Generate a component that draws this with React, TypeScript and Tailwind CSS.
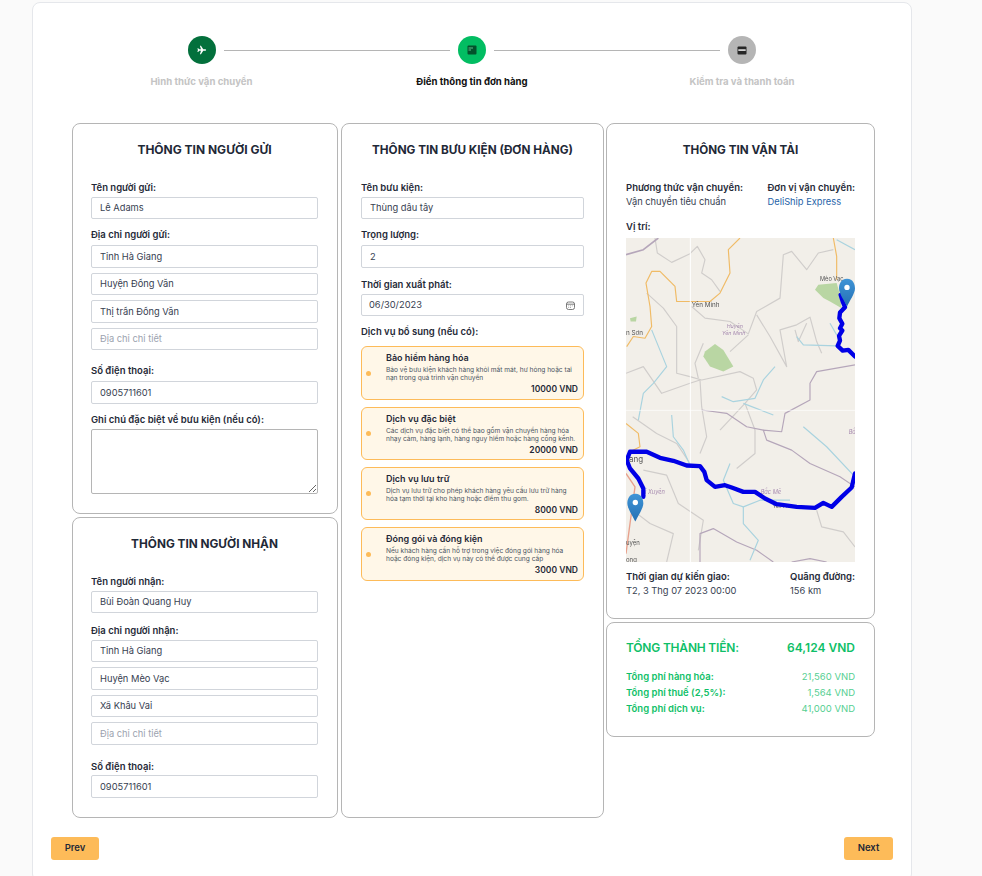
import React from "react";

const inputCls =
  "block w-full h-[22.5px] border border-[#d1d5db] rounded-[2px] bg-white px-2 text-[9.3px] text-[#374151] placeholder:text-[#9ca3af] outline-none";

function Label({ children, className = "" }: { children: React.ReactNode; className?: string }) {
  return <div className={"text-[9.5px] leading-[14px] font-semibold text-[#1f2937] " + className}>{children}</div>;
}

function In({ value, placeholder }: { value?: string; placeholder?: string }) {
  return <input className={inputCls} defaultValue={value} placeholder={placeholder} readOnly />;
}

function Heading({ children, className = "text-[11.7px]" }: { children: React.ReactNode; className?: string }) {
  return <h2 className={"text-center leading-[18px] font-bold text-[#1f2937] " + className}>{children}</h2>;
}

function Address({ lines }: { lines: string[] }) {
  return (
    <div className="flex flex-col gap-[5px]">
      {lines.map((l) => (
        <In key={l} value={l} />
      ))}
      <In placeholder="Địa chỉ chi tiết" />
    </div>
  );
}

function Service({ title, desc, price, h }: { title: string; desc: string[]; price: string; h: string }) {
  return (
    <div className={"flex items-center rounded-[6px] border border-[#fdbb59] bg-[#fff7e8] pl-[4px] pr-[5px] " + h}>
      <span className="w-[5px] h-[5px] rounded-full bg-[#fdbb59] mr-[15px] shrink-0" />
      <div className="flex-1 self-stretch pt-[5px]">
        <div className="text-[9px] leading-[12px] font-semibold text-[#1f2937]">{title}</div>
        <div className="text-[6.6px] leading-[8px] mt-[1.5px] text-[#4b5563]">
          {desc.map((d) => (
            <div key={d}>{d}</div>
          ))}
        </div>
        <div className="text-right text-[8.5px] leading-[12px] font-semibold text-[#1f2937] mt-[1.5px]">{price}</div>
      </div>
    </div>
  );
}

function MapView() {
  return (
    <div className="overflow-hidden h-[324px]">
      <svg viewBox="48 25 687 970" className="block w-full h-[324px] blur-[0.35px]" preserveAspectRatio="none">
        <rect x="48" y="25" width="687" height="970" fill="#f2efe9" />
        <g fill="none" stroke="#d0cdcb" strokeWidth="3.5" strokeLinejoin="round">
          <path d="M135 25 L142 70 L185 98 L240 72 L262 50 L285 90 L275 130 L305 150 L330 185" />
          <path d="M245 230 L285 265 L360 275 L415 312 L440 245 L510 205 L520 75 L545 65 L590 120 L625 70 L670 60" />
          <path d="M360 365 L415 315" />
          <path d="M110 190 L160 235 L200 290 L200 430 L240 440 L275 450 L390 425 L430 445 L440 480 L405 520 L435 600 L435 670 L380 715" />
          <path d="M48 430 L100 410 L155 490 L240 460 L270 450 L275 530 L290 620 L270 670" />
          <path d="M440 255 L480 320 L530 410 L510 300 L560 285 L600 262 L620 335 L635 370" />
          <path d="M555 300 L565 335 L590 280" />
          <path d="M68 560 L140 610 L200 640 L240 700" />
          <path d="M100 720 L170 735 L205 820 L280 870 L265 960" />
          <path d="M620 840 L635 890 L700 905 L735 950" />
          <path d="M55 830 L120 880 L190 910 L170 995" />
          <path d="M265 445 L255 400 L280 340" />
          <path d="M330 600 L405 520" />
        </g>
        <g fill="none" stroke="#b5a6ba" strokeWidth="3.5" strokeLinejoin="round">
          <path d="M48 75 L100 60 L145 25" strokeWidth="5" />
          <path d="M735 405 L620 425 L600 460 L600 510 L525 550 L515 605 L460 600 L470 630 L545 660 L600 700 L690 740 L735 770" />
          <path d="M270 995 L270 910 L310 895 L380 935 L440 960 L490 995" />
          <path d="M545 995 L600 985 L650 995" />
          <path d="M275 540 L350 550 L410 590 L460 600" />
        </g>
        <g fill="none" stroke="#f0bb66" strokeWidth="3.5" strokeLinejoin="round">
          <path d="M390 25 L355 60 L360 130 L330 190 L300 215 L200 215 L195 170 L150 125 L125 125 L108 160 L120 230 L125 290 L105 325 L70 320 L50 350" />
          <path d="M670 25 L680 80 L680 150" />
          <path d="M48 580 L85 610 L90 650 L60 665" />
        </g>
        <g fill="none" stroke="#a9d3df" strokeWidth="3.5" strokeLinejoin="round">
          <path d="M125 300 L170 410 L130 460 L100 490 L85 570" />
          <path d="M495 410 L460 450 L435 505 L370 515 L335 500" />
          <path d="M400 520 L490 555" />
          <path d="M185 555 L190 620 L220 660 L240 705" />
          <path d="M580 590 L650 650 L735 740" />
          <path d="M360 700 L340 750 L370 820 L400 830 L450 810 L540 810" />
          <path d="M400 830 L400 880 L445 930 L420 990" />
          <path d="M560 320 L580 345 L680 348" />
          <path d="M660 280 L680 315" />
          <path d="M680 30 L735 60" />
        </g>
        <path d="M48 730 L75 770 L60 880 L48 970" fill="none" stroke="#e8a08c" strokeWidth="4" />
        <path d="M625 165 L680 160 L690 195 L695 235 L660 215 L640 205 L615 180 Z" fill="#b9d6a3" />
        <path d="M315 342 L340 360 L370 410 L340 425 L300 410 L280 380 L285 365 Z" fill="#b9d6a3" />
        <path d="M60 265 L80 260 L78 275 L62 275 Z" fill="#b9d6a3" />
        <path d="M241 25 V995" stroke="#ffffff" strokeWidth="3" fill="none" />
        <path d="M48 541 H735" stroke="#ffffff" strokeWidth="2.5" opacity="0.8" fill="none" />
        <g fontFamily="Inter, sans-serif">
          <text x="630" y="154" fontSize="17" fill="#555">Mèo Vạc</text>
          <text x="245" y="232" fontSize="19" fill="#555">Yên Minh</text>
          <text x="48" y="314" fontSize="19" fill="#555">n Sơn</text>
          <text x="350" y="293" fontSize="16" fill="#a78bb0" fontStyle="italic">Huyện</text>
          <text x="336" y="316" fontSize="16" fill="#a78bb0" fontStyle="italic">Yên Minh</text>
          <text x="57" y="696" fontSize="24" fill="#555">ang</text>
          <text x="105" y="792" fontSize="17" fill="#a78bb0" fontStyle="italic">ị Xuyên</text>
          <text x="452" y="791" fontSize="17" fill="#a78bb0" fontStyle="italic">Bắc Mê</text>
          <text x="716" y="613" fontSize="17" fill="#a78bb0" fontStyle="italic">Bắ</text>
          <text x="488" y="832" fontSize="15" fill="#555">Yên Phú</text>
          <text x="48" y="944" fontSize="18" fill="#555">uyện</text>
          <text x="48" y="995" fontSize="18" fill="#555">ong</text>
        </g>
        <g fill="none" stroke="#0000e6" strokeWidth="13" strokeLinejoin="round" strokeLinecap="round">
          <path d="M692 195 L698 215 L705 232 L690 248 L688 265 L697 282 L690 295 L697 302 L687 318 L690 332 L683 348 L698 362 L715 360 L735 380" />
          <path d="M735 730 L725 772 L695 800 L665 830 L640 818 L615 833 L560 830 L500 822 L465 805 L435 785 L400 785 L365 772 L345 765 L315 770 L290 750 L283 725 L270 708 L230 706 L190 692 L150 683 L110 665 L60 665 L50 690 L60 715 L85 745 L100 775 L100 800" />
        </g>
        <defs>
          <linearGradient id="pin" x1="0" y1="0" x2="0" y2="1">
            <stop offset="0" stopColor="#3f94d6" />
            <stop offset="1" stopColor="#2470b4" />
          </linearGradient>
        </defs>
        <path d="M711 147 C692 147 687 165 687 176 C687 190 704 215 711 230 C718 215 735 190 735 176 C735 165 730 147 711 147 Z" fill="url(#pin)" />
        <circle cx="711" cy="173" r="8" fill="#fff" />
        <path d="M76 791 C57 791 52 809 52 820 C52 834 69 859 76 874 C83 859 100 834 100 820 C100 809 95 791 76 791 Z" fill="url(#pin)" />
        <circle cx="76" cy="817" r="8" fill="#fff" />
      </svg>
    </div>
  );
}

function StepIcon({ bg, children }: { bg: string; children: React.ReactNode }) {
  return <div className={"w-[28px] h-[28px] rounded-full flex items-center justify-center shrink-0 " + bg}>{children}</div>;
}

export default function App() {
  return (
    <div className="h-[876px] overflow-hidden bg-[#fafafa] pt-[2px] font-['Inter',sans-serif]">
      <div className="ml-[32px] w-[880px] h-[880px] bg-white border border-[#e5e7eb] rounded-[8px]">
        <div className="pt-[33px] pl-[155px] w-[723px]">
          <div className="flex items-center">
            <StepIcon bg="bg-[#03703c]">
              <svg width="10" height="10" viewBox="0 0 24 24" fill="#fff">
                <path d="M22 12c0-1.200-1-2-2.200-2H15L9.500 2H7l2.500 8H5L3 7.500H1L2.200 12 1 16.500h2L5 14h4.500L7 22h2.500l5.500-8h4.800C21 14 22 13.200 22 12z" />
              </svg>
            </StepIcon>
            <div className="flex-1 h-[1px] bg-[#b5b5b5] mx-[8px]" />
            <StepIcon bg="bg-[#02bd62]">
              <svg width="10" height="10" viewBox="0 0 10 10">
                <rect x="0.500" y="0.500" width="9" height="9" rx="1" fill="#03512b" />
                <path d="M1.500 3H6M1.500 5H4" stroke="#7fd8a8" strokeWidth="0.8" />
              </svg>
            </StepIcon>
            <div className="flex-1 h-[1px] bg-[#b5b5b5] mx-[8px]" />
            <StepIcon bg="bg-[#b5b5b5]">
              <svg width="10" height="9" viewBox="0 0 10 9">
                <rect x="0.500" y="0.500" width="9" height="8" rx="1" fill="#262626" />
                <rect x="1.300" y="3.200" width="7.400" height="1.800" fill="#d0d0d0" />
              </svg>
            </StepIcon>
          </div>
        </div>
        <div className="flex mt-[11px] pl-[33px] text-[9.6px] leading-[14px] font-bold text-center">
          <div className="w-[271px] text-[#c4c4c4]">Hình thức vận chuyển</div>
          <div className="w-[270px] text-[#111]">Điền thông tin đơn hàng</div>
          <div className="w-[270px] text-[#c4c4c4]">Kiểm tra và thanh toán</div>
        </div>

        <div className="flex pl-[39px] mt-[34px] gap-[2px] items-start">
          <div className="w-[266px] mr-[1px] flex flex-col gap-[3px]">
            <section className="h-[391px] border border-[#b5b5b5] rounded-[8px] pl-[18px] pr-[19px] pt-[17px]">
              <Heading className="text-[12px]">THÔNG TIN NGƯỜI GỬI</Heading>
              <Label className="mt-[21.5px] mb-[2px]">Tên người gửi:</Label>
              <In value="Lê Adams" />
              <Label className="mt-[9px] mb-[3px]">Địa chỉ người gửi:</Label>
              <Address lines={["Tỉnh Hà Giang", "Huyện Đồng Văn", "Thị trấn Đồng Văn"]} />
              <Label className="mt-[14px] mb-[3px]">Số điện thoại:</Label>
              <In value="0905711601" />
              <Label className="mt-[9.5px] mb-[2px]">Ghi chú đặc biệt về bưu kiện (nếu có):</Label>
              <textarea className="block w-full h-[65px] border border-[#b5b5b5] rounded-[2px] bg-white outline-none" readOnly />
            </section>
            <section className="h-[301px] border border-[#b5b5b5] rounded-[8px] pl-[18px] pr-[19px] pt-[17px]">
              <Heading className="text-[11.8px]">THÔNG TIN NGƯỜI NHẬN</Heading>
              <Label className="mt-[21.5px] mb-[2px]">Tên người nhận:</Label>
              <In value="Bùi Đoàn Quang Huy" />
              <Label className="mt-[10.5px] mb-[2px]">Địa chỉ người nhận:</Label>
              <Address lines={["Tỉnh Hà Giang", "Huyện Mèo Vạc", "Xã Khâu Vai"]} />
              <Label className="mt-[15px] mb-[1.5px]">Số điện thoại:</Label>
              <In value="0905711601" />
            </section>
          </div>

          <section className="w-[263px] h-[695px] border border-[#b5b5b5] rounded-[8px] px-[19px] pt-[17px]">
            <Heading className="text-[11.75px]">THÔNG TIN BƯU KIỆN (ĐƠN HÀNG)</Heading>
            <Label className="mt-[22px] mb-[1.5px]">Tên bưu kiện:</Label>
            <In value="Thùng dâu tây" />
            <Label className="mt-[9px] mb-[3px]">Trọng lượng:</Label>
            <In value="2" />
            <Label className="mt-[10.5px] mb-[1.5px]">Thời gian xuất phát:</Label>
            <div className="relative">
              <input
                type="date"
                className={inputCls + " pl-[7px] [&::-webkit-datetime-edit-text]:p-0 [&::-webkit-datetime-edit-month-field]:p-0 [&::-webkit-datetime-edit-day-field]:p-0 [&::-webkit-datetime-edit-year-field]:p-0 [&::-webkit-calendar-picker-indicator]:opacity-0"}
                defaultValue="2023-06-30"
              />
              <svg className="absolute right-[9px] top-[7px]" width="9" height="9" viewBox="0 0 9 9" fill="none">
                <rect x="0.500" y="1" width="8" height="7.500" rx="2" stroke="#5b5b5b" strokeWidth="0.8" />
                <path d="M0.700 3.200H8.300" stroke="#5b5b5b" strokeWidth="0.8" />
                <path d="M2.500 4.800h.6M4.200 4.800h.6M5.900 4.800h.6M2.500 6.500h.6M4.200 6.500h.6" stroke="#5b5b5b" strokeWidth="0.8" />
              </svg>
            </div>
            <Label className="mt-[9px] mb-[7px]">Dịch vụ bổ sung (nếu có):</Label>
            <div className="flex flex-col gap-[7px]">
              <Service h="h-[54px]" title="Bảo hiểm hàng hóa" desc={["Bảo vệ bưu kiện khách hàng khỏi mất mát, hư hỏng hoặc tai", "nạn trong quá trình vận chuyển"]} price="10000 VND" />
              <Service h="h-[53px]" title="Dịch vụ đặc biệt" desc={["Các dịch vụ đặc biệt có thể bao gồm vận chuyển hàng hóa", "nhạy cảm, hàng lạnh, hàng nguy hiểm hoặc hàng cồng kềnh."]} price="20000 VND" />
              <Service h="h-[53px]" title="Dịch vụ lưu trữ" desc={["Dịch vụ lưu trữ cho phép khách hàng yêu cầu lưu trữ hàng", "hóa tạm thời tại kho hàng hoặc điểm thu gom."]} price="8000 VND" />
              <Service h="h-[54px]" title="Đóng gói và đóng kiện" desc={["Nếu khách hàng cần hỗ trợ trong việc đóng gói hàng hóa", "hoặc đóng kiện, dịch vụ này có thể được cung cấp"]} price="3000 VND" />
            </div>
          </section>

          <div className="w-[269px] flex flex-col gap-[3px]">
            <section className="h-[496px] border border-[#b5b5b5] rounded-[8px] px-[19px] pt-[17px]">
              <Heading>THÔNG TIN VẬN TẢI</Heading>
              <div className="flex justify-between mt-[22px]">
                <div>
                  <Label>Phương thức vận chuyển:</Label>
                  <div className="text-[9.3px] leading-[14px] text-[#374151]">Vận chuyển tiêu chuẩn</div>
                </div>
                <div>
                  <Label>Đơn vị vận chuyển:</Label>
                  <div className="text-[9.3px] leading-[14px] text-[#2563a8]">DeliShip Express</div>
                </div>
              </div>
              <Label className="mt-[11px] mb-[4px]">Vị trí:</Label>
              <MapView />
              <div className="flex justify-between mt-[8px]">
                <div>
                  <Label>Thời gian dự kiến giao:</Label>
                  <div className="text-[9.3px] leading-[14px] text-[#374151]">T2, 3 Thg 07 2023 00:00</div>
                </div>
                <div>
                  <Label>Quãng đường:</Label>
                  <div className="text-[9.3px] leading-[14px] text-[#374151]">156 km</div>
                </div>
              </div>
            </section>
            <section className="h-[115px] border border-[#b5b5b5] rounded-[8px] px-[19px] pt-[17px]">
              <div className="flex justify-between text-[12px] leading-[16px] font-semibold text-[#0fbf68]">
                <span className="tracking-[-0.2px]">TỔNG THÀNH TIỀN:</span>
                <span>64,124 VND</span>
              </div>
              <div className="mt-[13px] text-[9.5px] leading-[16px] text-[#0fbf68]">
                <div className="flex justify-between"><span className="font-semibold">Tổng phí hàng hóa:</span><span className="text-[#55cf92]">21,560 VND</span></div>
                <div className="flex justify-between"><span className="font-semibold">Tổng phí thuế (2,5%):</span><span className="text-[#55cf92]">1,564 VND</span></div>
                <div className="flex justify-between"><span className="font-semibold">Tổng phí dịch vụ:</span><span className="text-[#55cf92]">41,000 VND</span></div>
              </div>
            </section>
          </div>
        </div>

        <div className="flex justify-between px-[18px] mt-[19px]">
          <button className="w-[48px] h-[23px] rounded-[3px] bg-[#fdbb59] text-[9.5px] font-semibold text-[#1f2937]">Prev</button>
          <button className="w-[49px] h-[23px] rounded-[3px] bg-[#fdbb59] text-[9.5px] font-semibold text-[#1f2937]">Next</button>
        </div>
      </div>
    </div>
  );
}
